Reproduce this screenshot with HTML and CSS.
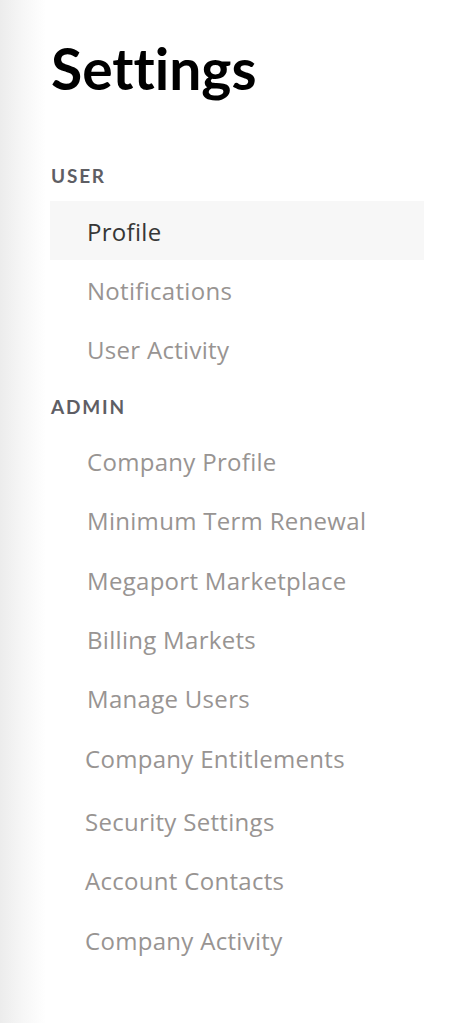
FILE: index.html
```html
<!DOCTYPE html>
<html>
<head>
<meta charset="utf-8">
<link rel="stylesheet" href="styles.css">
</head>
<body>
<aside class="sidebar">
  <h1 class="title">Settings</h1>
  <div class="section-title section-first">USER</div>
  <nav class="nav">
    <a class="nav-item active">Profile</a>
    <a class="nav-item">Notifications</a>
    <a class="nav-item">User Activity</a>
  </nav>
  <div class="section-title">ADMIN</div>
  <nav class="nav nav-admin">
    <a class="nav-item">Company Profile</a>
    <a class="nav-item">Minimum Term Renewal</a>
    <a class="nav-item">Megaport Marketplace</a>
    <a class="nav-item">Billing Markets</a>
    <a class="nav-item">Manage Users</a>
    <a class="nav-item alt">Company Entitlements</a>
    <a class="nav-item alt alt-gap">Security Settings</a>
    <a class="nav-item alt alt-tight">Account Contacts</a>
    <a class="nav-item alt">Company Activity</a>
  </nav>
</aside>
</body>
</html>
```

FILE: styles.css
```css
html, body {
  margin: 0;
  padding: 0;
  height: 100%;
}
body {
  background: linear-gradient(90deg, #ececec 0px, #f6f6f6 22px, #ffffff 46px);
  font-family: Lato, "Noto Sans", sans-serif;
  font-variant-ligatures: none;
}
.sidebar {
  padding: 40px 44px 0 50px;
  display: flex;
  flex-direction: column;
}
.title {
  margin: 0 0 70px 1px;
  font-size: 57px;
  line-height: 56px;
  font-weight: 700;
  color: #000;
}
.section-title {
  height: 20px;
  line-height: 20px;
  font-size: 19px;
  font-weight: 700;
  letter-spacing: 1.8px;
  color: #5e5e64;
  margin: 19px 0 14px 1px;
}
.section-first {
  margin-top: 0;
  margin-bottom: 15px;
}
.nav {
  display: flex;
  flex-direction: column;
}
.nav-item {
  display: block;
  box-sizing: border-box;
  height: 59px;
  padding-top: 3px;
  line-height: 55px;
  padding-left: 37px;
  font-family: "Open Sans", Lato, sans-serif;
  font-size: 24px;
  letter-spacing: 0.3px;
  color: #989492;
  text-decoration: none;
  font-variant-ligatures: none;
}
.nav-admin .nav-item {
  height: 59.25px;
}
.nav-item.active {
  background: #f7f7f7;
  color: #363636;
}
.nav-admin .nav-item.alt {
  padding-left: 35px;
  padding-top: 4px;
  height: 60px;
  line-height: 56px;
}
.nav-item.alt-gap {
  margin-top: 3px;
}
.nav-item.alt-tight {
  margin-top: -1px;
}
```
